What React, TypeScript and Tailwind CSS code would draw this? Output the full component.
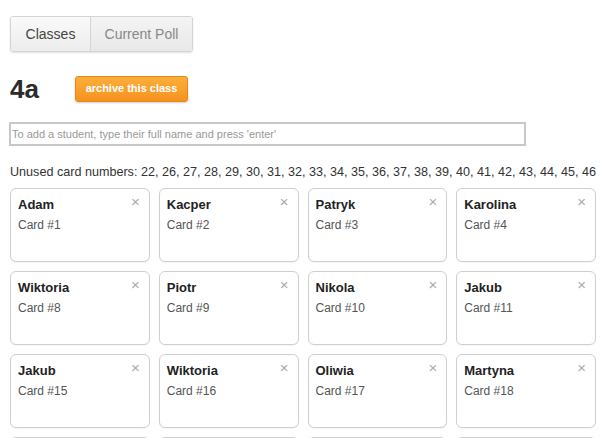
import React from 'react';

const students = [
  { name: 'Adam', card: 1 },
  { name: 'Kacper', card: 2 },
  { name: 'Patryk', card: 3 },
  { name: 'Karolina', card: 4 },
  { name: 'Wiktoria', card: 8 },
  { name: 'Piotr', card: 9 },
  { name: 'Nikola', card: 10 },
  { name: 'Jakub', card: 11 },
  { name: 'Jakub', card: 15 },
  { name: 'Wiktoria', card: 16 },
  { name: 'Oliwia', card: 17 },
  { name: 'Martyna', card: 18 },
];

const unused = [22, 26, 27, 28, 29, 30, 31, 32, 33, 34, 35, 36, 37, 38, 39, 40, 41, 42, 43, 44, 45, 46];

export default function App() {
  return (
    <div className="w-[600px] h-[438px] overflow-hidden bg-white text-[#333] font-['Liberation_Sans',Arial,sans-serif]">
      <div className="pl-[10px] pt-[16px]">
        {/* Tabs */}
        <div className="flex w-[183px] h-[36px] rounded-[3px] border border-[#d4d4d4] shadow-[0_1px_2px_rgba(0,0,0,0.12)] overflow-hidden text-[14px]">
          <div className="w-[80px] flex items-center justify-center bg-gradient-to-b from-[#fafafa] to-[#ececec] text-[#444] border-r border-[#d4d4d4]">
            Classes
          </div>
          <div className="flex-1 flex items-center justify-center bg-gradient-to-b from-[#f4f4f4] to-[#e8e8e8] text-[#888]">
            Current Poll
          </div>
        </div>

        {/* Class header */}
        <div className="flex items-center mt-[23px] h-[27px]">
          <h1 className="w-[65px] text-[26px] font-bold leading-none text-[#2b2b2b]">4a</h1>
          <button className="h-[26px] w-[113px] rounded-[3px] border border-[#e58a17] bg-gradient-to-b from-[#fbae3c] to-[#f6921e] text-white text-[11px] font-bold shadow-[0_1px_2px_rgba(0,0,0,0.2)]">
            archive this class
          </button>
        </div>

        {/* Input */}
        <div className="mt-[20px] ml-[-1px] w-[517px] h-[24px] border-2 border-[#c8c8c8] flex items-center px-[1px]">
          <span className="text-[11px] text-[#999] whitespace-nowrap">To add a student, type their full name and press 'enter'</span>
        </div>

        {/* Unused */}
        <div className="mt-[19px] text-[12.6px] whitespace-nowrap leading-[14px] text-[#333]">
          Unused card numbers: {unused.join(', ')}
        </div>

        {/* Cards */}
        <div className="mt-[9px] w-[586px] grid grid-cols-4 gap-x-[9px] gap-y-[9px]">
          {students.map((s, i) => (
            <div key={i} className="relative h-[74px] rounded-[6px] border border-[#cfcfcf] bg-white pl-[7px] pt-[8px] shadow-[0_1px_1px_rgba(0,0,0,0.04)]">
              <div className="text-[13px] font-bold leading-[16px] text-[#222]">{s.name}</div>
              <div className="text-[12px] leading-[16px] mt-[4px] text-[#555]">Card #{s.card}</div>
              <span className="absolute right-[9px] top-[5px] text-[15px] leading-none text-[#aaa]">×</span>
            </div>
          ))}
          {[0, 1, 2, 3].map((i) => (
            <div key={`next-${i}`} className="h-[74px] rounded-[6px] border border-[#cfcfcf] bg-white" />
          ))}
        </div>
      </div>
    </div>
  );
}
